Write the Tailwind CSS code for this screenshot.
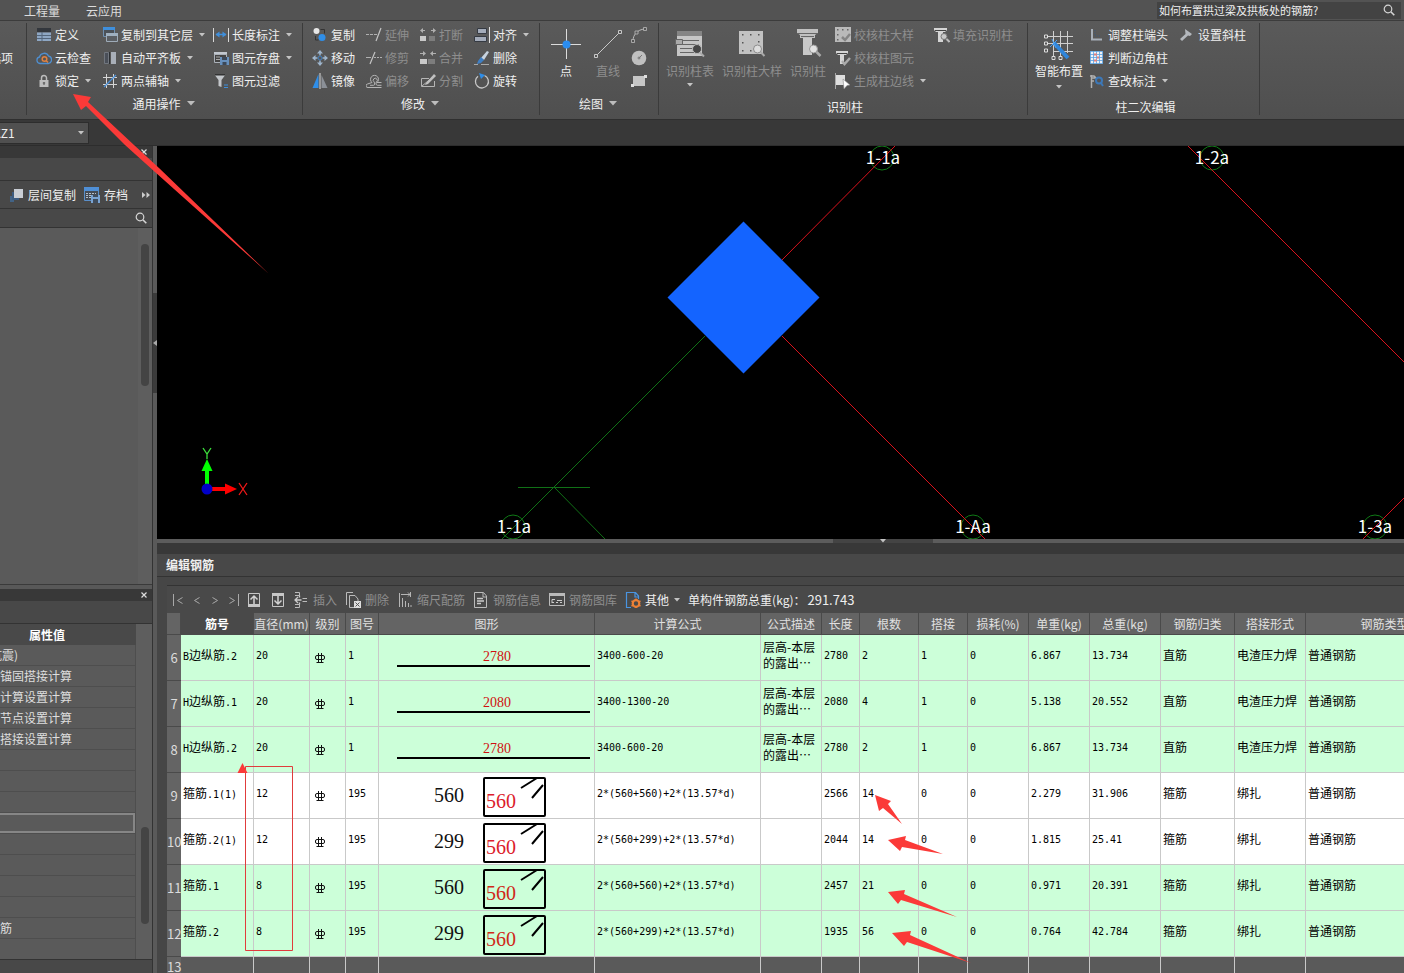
<!DOCTYPE html>
<html lang="zh-CN">
<head>
<meta charset="utf-8">
<meta name="viewport" content="width=device-width, initial-scale=1">
<title>编辑钢筋</title>
<script src="https://cdn.jsdelivr.net/npm/@tailwindcss/browser@4"></script>
</head>
<body class="relative flex h-screen flex-col overflow-hidden bg-[#383838] font-['Noto_Sans_CJK_SC',sans-serif] text-xs leading-4 text-[#efefef]">

<!-- Icon library -->
<svg class="hidden" aria-hidden="true">
  <symbol id="caret" viewBox="0 0 6 4"><path d="M0 0h6L3 3.5z" fill="#c4c4c4"/></symbol>
  <symbol id="caret-lg" viewBox="0 0 8 5"><path d="M0 0h8L4 4.5z" fill="#bdbdbd"/></symbol>
  <symbol id="define" viewBox="0 0 16 16"><path d="M1 1h14v4H1z" fill="#33373d"/><path d="M1 5.500h14V14H1z" fill="#8ea7c4"/><path d="M1 8.500h14M1 11.500h14M6 5v9" stroke="#54667c"/></symbol>
  <symbol id="cloud" viewBox="0 0 16 16"><path d="M4 13.500a3.300 3.300 0 0 1-.5-6.500A4.800 4.800 0 0 1 12.500 6a3.800 3.800 0 0 1-.3 7.500z" fill="none" stroke="#4f8fd0" stroke-width="1.300"/><circle cx="8.500" cy="9" r="2.300" fill="none" stroke="#e08243" stroke-width="1.500"/><path d="m10 10.500 2 2" stroke="#e08243" stroke-width="1.500"/></symbol>
  <symbol id="lock" viewBox="0 0 16 16"><path d="M5.500 7V5a2.500 2.500 0 0 1 5 0v2" fill="none" stroke="#bdbdbd" stroke-width="1.500"/><path d="M3.500 7h9v7h-9z" fill="#bdbdbd"/><path d="M8 9v3M6.800 10h2.400" stroke="#555"/></symbol>
  <symbol id="copy-floor" viewBox="0 0 16 16"><path d="M1.500 1.500h11v8h-11z" fill="#4b5158" stroke="#6f8faf"/><path d="M1 0h12v3H1z" fill="#3f8fdc"/><path d="M4.500 6.500h11v8h-11z" fill="#5b5f64" stroke="#9eabb8"/><path d="M4 6h12v3H4z" fill="#9fb0c0"/></symbol>
  <symbol id="align-slab" viewBox="0 0 16 16"><path d="M2.500 2.500h4v11h-4z" fill="#4a4f58" stroke="#71767e"/><path d="M9 2h5v12H9z" fill="#a9afb8"/><path d="M7.500 2v12" stroke="#2c2f33"/></symbol>
  <symbol id="axis2" viewBox="0 0 16 16"><path d="M4.500 1v14M11.500 1v14M1 4.500h14M1 11.500h14" stroke="#d5d5d5"/><path d="m2 14 12-12" stroke="#4a90d9" stroke-width="1.200"/></symbol>
  <symbol id="dim" viewBox="0 0 16 16"><path d="M.5 1v14M15.500 1v14" stroke="#d8d8d8"/><path d="M3 7.500h10" stroke="#3f8fdc" stroke-width="1.500"/><path d="m2.500 7.500 4-3v6zM13.500 7.500l-4-3v6z" fill="#3f8fdc"/></symbol>
  <symbol id="save-elem" viewBox="0 0 16 16"><path d="M1 2h13v3H1z" fill="#c2c7ce"/><path d="M1.500 4.500h12v8h-12z" fill="#444" stroke="#aab0b8"/><path d="M3 7h4M3 9.500h4" stroke="#aaa"/><path d="M7 7h9v8H7z" fill="#6790bd"/><path d="M9 7h5v3H9zM9.500 12h4v3h-4z" fill="#3c4858"/></symbol>
  <symbol id="filter" viewBox="0 0 16 16"><path d="M1 1h12L8.500 7v7l-3-1V7z" fill="#c3c6ca"/><path d="M1 1h12l-1 1.500H2z" fill="#333"/><path d="M11 12h4M11 14.500h4" stroke="#3f8fdc"/></symbol>
  <symbol id="copy" viewBox="0 0 16 16"><circle cx="4.500" cy="4" r="3" fill="#e6e6e6"/><path d="M8.500 2.500h4v4M3.500 9v4h3" fill="none" stroke="#333"/><circle cx="10" cy="10.500" r="3.500" fill="#2f8ee8"/></symbol>
  <symbol id="move" viewBox="0 0 16 16"><path d="m8 0 3 3.500H5zM8 16l3-3.500H5zM0 8l3.500-3v6zM16 8l-3.500-3v6z" fill="#9fb6cd"/><path d="M8 3v2.500M8 10.500V13M3 8h2.500M10.500 8H13" stroke="#9fb6cd" stroke-width="1.500"/><circle cx="8" cy="8" r="2" fill="none" stroke="#3f7fbf"/></symbol>
  <symbol id="mirror" viewBox="0 0 16 16"><path d="M6.500 1v14H.5z" fill="#2f8ee8"/><path d="M8 0v16" stroke="#ddd"/><path d="M9.500 2v13h6z" fill="#8b9097"/></symbol>
  <symbol id="extend" viewBox="0 0 16 16"><path d="M0 7.500h11" stroke="#b0b0b0" stroke-dasharray="3 1"/><path d="m10 14 5-13" stroke="#c4c4c4" stroke-width="1.200"/></symbol>
  <symbol id="trim" viewBox="0 0 16 16"><path d="M0 7.500h5" stroke="#b0b0b0"/><path d="M8 7.500h8" stroke="#b0b0b0" stroke-dasharray="2 1"/><path d="m4 14 5-12" stroke="#c4c4c4" stroke-width="1.200"/></symbol>
  <symbol id="offset" viewBox="0 0 16 16"><path d="M6 9.500a4 4 0 1 1 5 0h4.500M6 9.500 1.500 11a1.700 1.700 0 0 0 .5 3.500h13.500M4 12.300h3.500c1.500 0 1.500-2 .5-3.500a2 2 0 1 1 2.500 0c-1 1.500-.5 3.500 1 3.500h4" fill="none" stroke="#b5b5b5"/></symbol>
  <symbol id="break" viewBox="0 0 16 16"><path d="M5 3.500H1M11 3.500h4" stroke="#b0b0b0"/><path d="m0 3.500 3-2.500v5zM16 3.500 13 1v5z" fill="#b0b0b0"/><path d="M0 9h6v5H0z" fill="#c9c9c9"/><path d="M9 9h6v5H9z" fill="#7d7d7d"/></symbol>
  <symbol id="merge" viewBox="0 0 16 16"><path d="M0 3.500h5M11 3.500h5" stroke="#b0b0b0"/><path d="m6 3.500-3-2.500v5zM10 3.500 13 1v5z" fill="#b0b0b0"/><path d="M0 9h7v5H0z" fill="#c9c9c9"/><path d="M8 9h7v5H8z" fill="#7d7d7d"/></symbol>
  <symbol id="split" viewBox="0 0 16 16"><path d="M9 5.500H1.500v8h13V8M2 13l12-10" fill="none" stroke="#b5b5b5"/><path d="m6 10 8-9 2 2-8 8-3 1z" fill="#c0c0c0"/></symbol>
  <symbol id="align" viewBox="0 0 16 16"><path d="M3.500 1.500h9v5h-9zM.5 9.500h12v5H.5z" fill="#a4acba" stroke="#353a42"/><path d="M15.500 0v16" stroke="#e0e0e0"/></symbol>
  <symbol id="erase" viewBox="0 0 16 16"><path d="m7 8 6-7 2 1-5 8z" fill="#c7d3df"/><path d="m4 11 3-4 3 3-3 3-4 1z" fill="#3f7fc4"/><path d="M0 14.500h4M7 14.500h8" stroke="#aaa"/></symbol>
  <symbol id="rotate" viewBox="0 0 16 16"><path d="M10.500 2.500A6.500 6.500 0 1 1 4 3.300" fill="none" stroke="#c8c8c8" stroke-width="1.300"/><path d="m5 0 6 2-4 4z" fill="#2f8ee8"/></symbol>
  <symbol id="point" viewBox="0 0 30 30"><path d="M15.500 0v30M0 15.500h30" stroke="#dcdcdc"/><circle cx="15.500" cy="15.500" r="4" fill="#2b8df0"/></symbol>
  <symbol id="line" viewBox="0 0 30 30"><path d="M3.500 26.500 26.500 3.500" stroke="#c8c8c8"/><path d="M1.500 25.500h3v3h-3zM25.500 1.500h3v3h-3z" fill="#555" stroke="#c8c8c8"/></symbol>
  <symbol id="arc" viewBox="0 0 16 16"><path d="M2 14C2 8 6 2.500 14 2" fill="none" stroke="#bbb"/><path d="M.5 12.500h3v3h-3zM12.500.5h3v3h-3zM4 4h3v3H4z" fill="#555" stroke="#bbb" stroke-width=".8"/></symbol>
  <symbol id="disc" viewBox="0 0 16 16"><circle cx="8" cy="8" r="7.300" fill="#c0c0c0"/><path d="m8 8 3-3M6.500 8h3M8 6.500v3" stroke="#777"/></symbol>
  <symbol id="rect" viewBox="0 0 16 16"><path d="M2 3h12v10H2z" fill="#c6c6c6"/><path d="M13 2h3v3h-3zM0 11h3v3H0z" fill="#ddd"/></symbol>
  <symbol id="col-table" viewBox="0 0 30 30"><path d="M2 2h25v5H2z" fill="#858585"/><path d="M2 7h25v20H2z" fill="#c6c6c6"/><path d="M5 11.500h19M5 15.500h19M5 19.500h16M5 23.500h14" stroke="#666"/><path d="M.5 10.500h7v5h-7z" fill="#aaa" stroke="#666"/><circle cx="22" cy="20" r="4.500" fill="#484848" stroke="#bbb"/><path d="m25 23.500 4 4" stroke="#aaa" stroke-width="2"/></symbol>
  <symbol id="col-sample" viewBox="0 0 30 30"><path d="M2 2h24v23H2z" fill="#c2c2c2"/><path d="M5 5h1.500v1.500H5zM13 5h1.500v1.500H13zM21 5h1.500v1.500H21zM5 13h1.500v1.500H5zM21 12h1.500v1.500H21zM5 21h1.500v1.500H5zM13 21h1.500v1.500H13z" fill="#555"/><circle cx="20.500" cy="20" r="4" fill="#ddd" stroke="#8c8c8c"/><path d="m23.500 23 4 4" stroke="#aaa" stroke-width="2"/></symbol>
  <symbol id="col-id" viewBox="0 0 30 30"><path d="M4 0h21v4l-3 2v3H7V6L4 4z" fill="#c0c0c0"/><path d="M4 4.500h21M8 7.500h13" stroke="#666"/><path d="M10 9h9v17h-9z" fill="#c9c9c9"/><circle cx="20.500" cy="20" r="4" fill="#e2e2e2" stroke="#999"/><path d="m23.500 23 4 4" stroke="#aaa" stroke-width="2.500"/></symbol>
  <symbol id="chk-sample" viewBox="0 0 16 16"><path d="M0 0h16v15H0z" fill="#bababa"/><path d="M2 2h1.500v1.500H2zM7 2h1.500v1.500H7zM12 2h1.500v1.500H12zM2 7h1.500v1.500H2zM2 12h1.500v1.500H2z" fill="#666"/><path d="m7 10 3 3 5-6" fill="none" stroke="#858585" stroke-width="2.500"/></symbol>
  <symbol id="chk-col" viewBox="0 0 16 16"><path d="M1 1h12v2l-2 2H3L1 3zM5 5h4v9H5z" fill="#d5d5d5"/><path d="M2 3.500h10" stroke="#444"/><path d="m7 11 2.500 3L15 8" fill="none" stroke="#aaa" stroke-width="2.500"/></symbol>
  <symbol id="col-edge" viewBox="0 0 16 16"><path d="M.5 0v16" stroke="#aaa"/><path d="M1 2h9v10H1z" fill="#dedede"/><path d="m8 6 7 6-3 .5L9 16z" fill="#fff" stroke="#888" stroke-width=".6"/></symbol>
  <symbol id="fill-col" viewBox="0 0 16 16"><path d="M0 1h13v2l-2 2H2L0 3zM4 5h5v10H4z" fill="#d5d5d5"/><path d="M1 3.500h11" stroke="#444"/><circle cx="10" cy="9.500" r="3" fill="#c8c8c8" stroke="#777"/><path d="m12.500 12 3 3" stroke="#bbb" stroke-width="2"/></symbol>
  <symbol id="smart" viewBox="0 0 30 32"><path d="M9.500 2v26M16.500 2v26M23.500 2v22M3 7.500h26M3 14.500h26M10 22.500h19" stroke="#d0d0d0"/><path d="M.5 6h3v3h-3zM.5 13h3v3h-3zM.5 20h3v3h-3zM8 27.500h3v3H8zM15 27.500h3v3h-3z" fill="#555" stroke="#ddd"/><path d="m10 14 14 15" stroke="#2f86dc" stroke-width="4"/><path d="m6 18 7-7M8 10l4 9" stroke="#4ba0f0"/></symbol>
  <symbol id="end" viewBox="0 0 16 16"><path d="M3 2v10.500H13" fill="none" stroke="#a8b0ba" stroke-width="2"/><path d="M6 3v6h6" fill="none" stroke="#3d5878" stroke-dasharray="1 1"/></symbol>
  <symbol id="corner" viewBox="0 0 16 16"><path d="M1 1h13v13H1z" fill="#f0f3f7"/><path d="M1.500 1v13M4.500 1v13M7.500 1v13M10.500 1v13M13.500 1v13M1 1.500h13M1 4.500h13M1 7.500h13M1 10.500h13M1 13.500h13" stroke="#5aa0dd" stroke-width=".8"/><path d="M5 3.500h3v2H5zM8 6.500h2v2H8zM5 9.500h3v2H5z" fill="#e08080"/></symbol>
  <symbol id="check-mark" viewBox="0 0 16 16"><path d="M2.500 2v13M1 3h4l2 2H3M3 8h2" stroke="#b0b0b0" stroke-width="1.500" fill="none"/><circle cx="10" cy="7.500" r="3" fill="none" stroke="#3d78b8" stroke-width="2"/><path d="m12 10 2 3" stroke="#3d78b8" stroke-width="2"/></symbol>
  <symbol id="slant" viewBox="0 0 16 16"><path d="m6 2 7 5-2 2-2-.5-6 5.500-2-2L6.500 7z" fill="#b4b8bd"/></symbol>
  <symbol id="search" viewBox="0 0 12 12"><circle cx="5" cy="5" r="3.800" fill="none" stroke="#d5d5d5" stroke-width="1.200"/><path d="m7.800 7.800 3.500 3.500" stroke="#d5d5d5" stroke-width="1.600"/></symbol>
  <symbol id="layers" viewBox="0 0 16 16"><path d="M1 10h3M1 12h6M1 14h4" stroke="#3c7fc4"/><path d="M3 5h7v8H3z" fill="#3b5b80"/><path d="M5 2h9v9H5z" fill="#c9ced5"/></symbol>
  <symbol id="archive" viewBox="0 0 16 16"><path d="M.5 1.500h14v12H.5z" fill="#454b54" stroke="#5a8fca"/><path d="M0 0h15v4H0z" fill="#4f8fd6"/><path d="M2 6.500h10M2 8.500h6M2 10.500h5" stroke="#b4bfcc" stroke-dasharray="2 1"/><path d="M7 8h9v8H7z" fill="#79a3d2"/><path d="M9 8h5v2H9zM9 12h5v4H9z" fill="#3f4c5c"/></symbol>
  <symbol id="close" viewBox="0 0 6 6"><path d="m.5.5 5 5M5.500.5l-5 5" stroke="#ddd" stroke-width="1.200"/></symbol>
  <symbol id="up" viewBox="0 0 14 14"><path d="M1.500.5h11v13h-11z" fill="none" stroke="#c6c6c6"/><path d="M1 11h12v3H1z" fill="#c6c6c6"/><path d="M7 11V3M3.500 6.500 7 3l3.500 3.500" fill="none" stroke="#d2d2d2" stroke-width="1.500"/></symbol>
  <symbol id="down" viewBox="0 0 14 14"><path d="M1.500.5h11v13h-11z" fill="none" stroke="#c6c6c6"/><path d="M1 0h12v3H1z" fill="#c6c6c6"/><path d="M7 3v8M3.500 7.500 7 11l3.500-3.500" fill="none" stroke="#d2d2d2" stroke-width="1.500"/></symbol>
  <symbol id="insert" viewBox="0 0 16 16"><path d="M2 .5h4.500v3H2M2 15.500h4.500v-3H2M9.500 6.500H14M9.500 9.500H14" fill="none" stroke="#bbb"/><path d="M2 8h6.500M5 5 2 8l3 3M6.500 3.500v2M6.500 10.500v2" fill="none" stroke="#ccc" stroke-width="1.300"/></symbol>
  <symbol id="delete" viewBox="0 0 16 16"><path d="M1.500 13V.5H8M4.500 15.500v-12H10l3 3.500v8.500z" fill="none" stroke="#bbb"/><path d="M9 9h7v7H9z" fill="#ddd"/><path d="m10.500 10.500 4 4m0-4-4 4" stroke="#555"/></symbol>
  <symbol id="scale" viewBox="0 0 16 16"><path d="M2.500 1v14M5.500 6v9M8.500 9v6M11.500 11v4M14 13v2" stroke="#b5b5b5"/><path d="M4 2.500h9M11 .5l2 2-2 2M13.500 0v5" fill="none" stroke="#b5b5b5"/></symbol>
  <symbol id="info" viewBox="0 0 16 16"><path d="M1.500.5h9l3 3.500v11.500h-12zM10 1v4h4" fill="none" stroke="#bbb"/><path d="M4 6.500h6M4 9h7M4 11.500h4" stroke="#ccc" stroke-width="1.300"/></symbol>
  <symbol id="library" viewBox="0 0 16 16"><path d="M.5 1.500h15v12H.5z" fill="none" stroke="#bbb"/><path d="M0 1h16v3H0z" fill="#bbb"/><path d="M3 11V7.500h3M8 8.500h5M3 10.500h2M7 10.500h2M11 10.500h2" fill="none" stroke="#ccc"/></symbol>
  <symbol id="other" viewBox="0 0 16 16"><path d="M6 15.500H1.500V.5h9l3 3.500v3M10 1v4h3" fill="none" stroke="#4a94e0" stroke-width="1.200"/><circle cx="11" cy="11.500" r="3.300" fill="none" stroke="#ee8136" stroke-width="2.200"/><path d="M11 6.500v2M11 14.500v1.500M6.500 9l2 1M13.500 13l2 1M6.500 14l2-1M13.500 10l2-1" stroke="#ee8136" stroke-width="1.500"/></symbol>
  <symbol id="grade" viewBox="0 0 10 12"><path d="M3.500 1v9M6.500 1v9M1.500 10.500h7" stroke="#111" fill="none"/><rect x=".5" y="3.500" width="9" height="4" rx="1.500" fill="none" stroke="#111"/></symbol>
  <symbol id="hoop" viewBox="0 0 215 45"><rect x="105" y="5" width="61" height="38" rx="1" fill="none" stroke="#000" stroke-width="2"/><path d="m142 15 16-10M153 25l11-13" stroke="#000" stroke-width="2"/></symbol>
</svg>

<!-- Menu tabs and help search -->
<header class="flex h-[21px] shrink-0 items-center border-b border-[#3c3c3c] bg-[#535353] pl-6">
  <nav class="flex gap-[26px] pt-px text-[#dcdcdc]"><a href="#">工程量</a><a href="#">云应用</a></nav>
  <label class="ml-auto mr-[3px] flex h-[17px] w-[244px] items-center bg-[#434343] pr-1.5">
    <input aria-label="搜索帮助" class="h-4 min-w-0 flex-1 bg-transparent px-[2px] text-[11px] leading-4 outline-none" value="如何布置拱过梁及拱板处的钢筋?">
    <svg class="size-3"><use href="#search"/></svg>
  </label>
</header>

<!-- Ribbon -->
<div class="flex h-[99px] shrink-0 border-b border-[#2f2f2f] bg-linear-to-b from-[#5a5a5a] to-[#4f4f4f] pt-[2px] pb-1 [&_button]:flex [&_button]:items-center [&_button]:whitespace-nowrap [&_section]:shrink-0 [&_section]:border-r [&_section]:border-[#3b3b3b]">
  <section class="w-[27px] overflow-hidden pt-[23px]"><button class="-ml-[11px] h-[23px]">选项</button></section>

  <section class="flex w-[276px] flex-col">
    <div class="grid grid-cols-[66px_111px_auto] grid-rows-[repeat(3,23px)] pl-[9px] [&_button]:gap-[3px]">
      <button><svg class="size-4"><use href="#define"/></svg>定义</button>
      <button><svg class="size-4"><use href="#copy-floor"/></svg>复制到其它层<svg class="ml-[3px] h-1 w-1.5"><use href="#caret"/></svg></button>
      <button><svg class="size-4"><use href="#dim"/></svg>长度标注<svg class="ml-[3px] h-1 w-1.5"><use href="#caret"/></svg></button>
      <button><svg class="size-4"><use href="#cloud"/></svg>云检查</button>
      <button><svg class="size-4"><use href="#align-slab"/></svg>自动平齐板<svg class="ml-[3px] h-1 w-1.5"><use href="#caret"/></svg></button>
      <button><svg class="size-4"><use href="#save-elem"/></svg>图元存盘<svg class="ml-[3px] h-1 w-1.5"><use href="#caret"/></svg></button>
      <button><svg class="size-4"><use href="#lock"/></svg>锁定<svg class="ml-[3px] h-1 w-1.5"><use href="#caret"/></svg></button>
      <button><svg class="size-4"><use href="#axis2"/></svg>两点辅轴<svg class="ml-[3px] h-1 w-1.5"><use href="#caret"/></svg></button>
      <button><svg class="size-4"><use href="#filter"/></svg>图元过滤</button>
    </div>
    <button class="h-7 justify-center gap-1.5 pr-[2px]">通用操作<svg class="h-[5px] w-2"><use href="#caret-lg"/></svg></button>
  </section>

  <section class="flex w-[237px] flex-col">
    <div class="grid grid-cols-[54px_54px_54px_auto] grid-rows-[repeat(3,23px)] pl-[9px] [&_button]:gap-[3px]">
      <button><svg class="size-4"><use href="#copy"/></svg>复制</button>
      <button class="text-[#8e8e8e]"><svg class="size-4"><use href="#extend"/></svg>延伸</button>
      <button class="text-[#8e8e8e]"><svg class="size-4"><use href="#break"/></svg>打断</button>
      <button><svg class="size-4"><use href="#align"/></svg>对齐<svg class="ml-[3px] h-1 w-1.5"><use href="#caret"/></svg></button>
      <button><svg class="size-4"><use href="#move"/></svg>移动</button>
      <button class="text-[#8e8e8e]"><svg class="size-4"><use href="#trim"/></svg>修剪</button>
      <button class="text-[#8e8e8e]"><svg class="size-4"><use href="#merge"/></svg>合并</button>
      <button><svg class="size-4"><use href="#erase"/></svg>删除</button>
      <button><svg class="size-4"><use href="#mirror"/></svg>镜像</button>
      <button class="text-[#8e8e8e]"><svg class="size-4"><use href="#offset"/></svg>偏移</button>
      <button class="text-[#8e8e8e]"><svg class="size-4"><use href="#split"/></svg>分割</button>
      <button><svg class="size-4"><use href="#rotate"/></svg>旋转</button>
    </div>
    <button class="h-7 justify-center gap-1.5 pr-[2px]">修改<svg class="h-[5px] w-2"><use href="#caret-lg"/></svg></button>
  </section>

  <section class="flex w-[119px] flex-col">
    <div class="flex h-[69px] gap-3 pl-[11px]">
      <button class="w-[30px] flex-col gap-1 pt-1.5"><svg class="size-[30px]"><use href="#point"/></svg>点</button>
      <button class="w-[30px] flex-col gap-1 pt-1.5 text-[#8e8e8e]"><svg class="size-[30px]"><use href="#line"/></svg>直线</button>
      <div class="-ml-1 flex flex-col [&>button]:h-[23px]">
        <button aria-label="弧"><svg class="size-4"><use href="#arc"/></svg></button>
        <button aria-label="圆"><svg class="size-4"><use href="#disc"/></svg></button>
        <button aria-label="矩形"><svg class="size-4"><use href="#rect"/></svg></button>
      </div>
    </div>
    <button class="h-7 justify-center gap-1.5 pr-[2px]">绘图<svg class="h-[5px] w-2"><use href="#caret-lg"/></svg></button>
  </section>

  <section class="flex w-[369px] flex-col">
    <div class="flex h-[69px] pl-[7px] text-[#8e8e8e]">
      <div class="flex gap-2 pr-[9px] [&>button]:flex-col [&>button]:gap-1 [&>button]:pt-1.5">
        <button><svg class="size-[30px]"><use href="#col-table"/></svg>识别柱表<svg class="h-1 w-1.5"><use href="#caret"/></svg></button>
        <button><svg class="size-[30px]"><use href="#col-sample"/></svg>识别柱大样</button>
        <button><svg class="size-[30px]"><use href="#col-id"/></svg>识别柱</button>
      </div>
      <div class="grid grid-cols-[99px_auto] grid-rows-[repeat(3,23px)] [&>button]:gap-[3px]">
        <button><svg class="size-4"><use href="#chk-sample"/></svg>校核柱大样</button>
        <button><svg class="size-4"><use href="#fill-col"/></svg>填充识别柱</button>
        <button class="col-span-2"><svg class="size-4"><use href="#chk-col"/></svg>校核柱图元</button>
        <button class="col-span-2"><svg class="size-4"><use href="#col-edge"/></svg>生成柱边线<svg class="ml-[3px] h-1 w-1.5"><use href="#caret"/></svg></button>
      </div>
    </div>
    <h2 class="pt-[7px] pl-1 text-center">识别柱</h2>
  </section>

  <section class="flex w-[232px] flex-col">
    <div class="flex h-[69px] gap-1.5 pl-[7px]">
      <button class="flex-col gap-[2px] pt-1.5"><svg class="h-8 w-[30px]"><use href="#smart"/></svg>智能布置<svg class="mt-1 h-1 w-1.5"><use href="#caret"/></svg></button>
      <div class="grid grid-cols-[90px_auto] grid-rows-[repeat(3,23px)] [&>button]:gap-[3px]">
        <button><svg class="size-4"><use href="#end"/></svg>调整柱端头</button>
        <button><svg class="size-4"><use href="#slant"/></svg>设置斜柱</button>
        <button class="col-span-2"><svg class="size-4"><use href="#corner"/></svg>判断边角柱</button>
        <button class="col-span-2"><svg class="size-4"><use href="#check-mark"/></svg>查改标注<svg class="ml-[3px] h-1 w-1.5"><use href="#caret"/></svg></button>
      </div>
    </div>
    <h2 class="pt-[7px] pl-1 text-center">柱二次编辑</h2>
  </section>
</div>

<!-- Component picker -->
<div class="flex h-[26px] shrink-0 items-center border-b border-[#2d2d2d] bg-[#383838]">
  <div class="relative">
    <select aria-label="构件" class="-ml-3 h-[22px] w-[101px] appearance-none border border-[#2d2d2d] bg-[#505050] pl-1 text-xs leading-4"><option>KZ1</option></select>
    <svg class="pointer-events-none absolute top-[9px] right-[5px] h-1 w-1.5"><use href="#caret"/></svg>
  </div>
</div>

<div class="flex min-h-0 flex-1">
  <!-- Left docks -->
  <aside class="flex w-[153px] shrink-0 flex-col border-r border-[#333] bg-[#484848]">
    <div class="flex h-3 shrink-0 items-center justify-end bg-[#383838] pr-[5px]"><button aria-label="关闭构件列表"><svg class="size-1.5"><use href="#close"/></svg></button></div>
    <div class="h-[23px] shrink-0 border-b border-[#333]"></div>
    <div class="flex h-7 shrink-0 items-center gap-2 border-b border-[#333] pl-[9px]">
      <button class="flex items-center gap-[3px]"><svg class="size-4"><use href="#layers"/></svg>层间复制</button>
      <button class="flex items-center gap-1"><svg class="size-4"><use href="#archive"/></svg>存档</button>
      <button aria-label="更多" class="ml-1.5"><svg class="h-1.5 w-2" viewBox="0 0 8 6"><path d="m0 0 3.500 3L0 6zM4.500 0 8 3 4.500 6z" fill="#ccc"/></svg></button>
    </div>
    <label class="flex h-[19px] shrink-0 items-center border-b border-[#333] pr-[5px]"><input aria-label="搜索构件" class="min-w-0 flex-1 bg-transparent outline-none"><svg class="size-3"><use href="#search"/></svg></label>
    <div class="flex h-[357px] shrink-0 justify-end border-b border-[#3a3a3a] bg-[#5a5a5a]">
      <div class="w-[14px] bg-[#5e5e5e] pt-4 pl-[3px]"><div class="h-[142px] w-2 rounded-full bg-[#444]"></div></div>
    </div>
    <div class="h-1 shrink-0 bg-[#585858]"></div>
    <div class="flex h-3 shrink-0 items-center justify-end bg-[#383838] pr-[5px]"><button aria-label="关闭属性列表"><svg class="size-1.5"><use href="#close"/></svg></button></div>
    <div class="h-[23px] shrink-0 border-b border-[#333]"></div>
    <div class="flex h-[336px] shrink-0 border-b border-[#333] bg-[#5a5a5a]">
      <div class="flex-1 overflow-hidden">
        <table class="w-full table-fixed border-separate border-spacing-0 text-[#dedede] [&_td]:h-[21px] [&_td]:border-r [&_td]:border-b [&_td]:border-[#4e4e4e] [&_td]:p-0 [&_td]:whitespace-nowrap">
          <thead><tr><th class="h-[21px] bg-[#494949] p-0 pr-[42px] text-center font-bold text-white">属性值</th></tr></thead>
          <tbody>
            <tr><td><span class="-ml-[10px]">抗震)</span></td></tr>
            <tr><td>锚固搭接计算</td></tr>
            <tr><td>计算设置计算</td></tr>
            <tr><td>节点设置计算</td></tr>
            <tr><td>搭接设置计算</td></tr>
            <tr><td></td></tr><tr><td></td></tr><tr><td></td></tr>
            <tr><td><div class="h-5 border-2 border-l-0 border-[#868686]"></div></td></tr>
            <tr><td></td></tr><tr><td></td></tr><tr><td></td></tr><tr><td></td></tr>
            <tr><td>筋</td></tr>
            <tr><td></td></tr>
          </tbody>
        </table>
      </div>
      <div class="w-4 bg-[#5e5e5e] pt-[203px] pl-[5px]"><div class="h-[97px] w-2 rounded-full bg-[#444]"></div></div>
    </div>
  </aside>
  <div class="w-1 shrink-0 bg-[#5a5a5a] pt-[147px]"><div class="flex h-[100px] items-center bg-[#3b3b3b]"><svg class="h-1.5 w-1" viewBox="0 0 4 6"><path d="M4 0v6L0 3z" fill="#aaa"/></svg></div></div>

  <main class="flex min-w-0 flex-1 flex-col">
    <!-- Drawing canvas -->
    <svg class="h-[393px] w-full shrink-0 bg-black" viewBox="157 146 1247 393" preserveAspectRatio="xMinYMin slice" role="img" aria-label="轴网与柱">
      <g fill="none" stroke="#0f7a16">
        <circle cx="882" cy="158" r="12"/><circle cx="1212" cy="158" r="12"/><circle cx="513" cy="527" r="12"/><circle cx="973" cy="527" r="12"/><circle cx="1375" cy="527" r="12"/>
        <path d="M705 336 502 539M518 487.500h72M554 487l51 52" stroke="#107016"/>
      </g>
      <path d="M895 146 782 260M782 336l203 203M1188 146l216 216M1404 498l-41 41" stroke="#d8121c"/>
      <path d="m743.500 221.500 76 76-76 76-76-76z" fill="#1464ff"/>
      <g class="font-['Noto_Sans_CJK_SC',sans-serif] text-[17px]" fill="#fff" text-anchor="middle">
        <text x="883" y="164">1-1a</text><text x="1212" y="164">1-2a</text><text x="514" y="533">1-1a</text><text x="973" y="533">1-Aa</text><text x="1375" y="533">1-3a</text>
      </g>
      <path d="M207 489v-20" stroke="#0f0" stroke-width="4"/><path d="m207 459 5.500 12h-11z" fill="#0f0"/>
      <path d="M207 489h20" stroke="#f00" stroke-width="4"/><path d="m237 489-12-5.500v11z" fill="#f00"/>
      <circle cx="207" cy="489" r="5.500" fill="#0000c8"/>
      <path d="m203 448 4 6 4-6M207 454v5" fill="none" stroke="#3ce03c" stroke-width="1.300"/>
      <path d="m239 483 8 12M247 483l-8 12" stroke="#f01818" stroke-width="1.300"/>
    </svg>
    <div class="flex h-1 shrink-0 justify-center bg-[#5c5c5c] pl-[205px]"><div class="flex w-[100px] justify-center bg-[#444]"><svg class="h-1 w-1.5"><use href="#caret"/></svg></div></div>
    <div class="h-[11px] shrink-0 bg-[#383838]"></div>
    <h2 class="flex h-[23px] shrink-0 items-center border-b border-[#333] bg-[#484848] pl-[9px] font-bold">编辑钢筋</h2>

    <section class="flex min-h-0 flex-1 flex-col bg-[#464646] pt-2 pl-2.5">
      <!-- Rebar toolbar -->
      <div class="flex h-7 shrink-0 items-center gap-2 border-t border-[#333] bg-[#494949] pl-1.5 text-[#8e8e8e] [&_button]:flex [&_button]:shrink-0 [&_button]:items-center [&_button]:gap-1">
        <div class="flex w-[66px] items-center justify-between [&_svg]:h-3 [&_svg]:w-2.5 [&_svg]:fill-none [&_svg]:stroke-[#a8a8a8]">
          <button aria-label="首行"><svg viewBox="0 0 10 12"><path d="M.5 0v12M9.500 3.500l-5 3 5 3"/></svg></button>
          <button aria-label="上一行"><svg viewBox="0 0 10 12"><path d="m7.500 3.500-5 3 5 3"/></svg></button>
          <button aria-label="下一行"><svg viewBox="0 0 10 12"><path d="m2.500 3.500 5 3-5 3"/></svg></button>
          <button aria-label="末行"><svg viewBox="0 0 10 12"><path d="M9.500 0v12M.5 3.500l5 3-5 3"/></svg></button>
        </div>
        <div class="flex gap-2.5"><button aria-label="上移"><svg class="size-[14px]"><use href="#up"/></svg></button>
        <button aria-label="下移"><svg class="size-[14px]"><use href="#down"/></svg></button></div>
        <button><svg class="size-4"><use href="#insert"/></svg>插入</button>
        <button><svg class="size-4"><use href="#delete"/></svg>删除</button>
        <button><svg class="size-4"><use href="#scale"/></svg>缩尺配筋</button>
        <button><svg class="size-4"><use href="#info"/></svg>钢筋信息</button>
        <button><svg class="size-4"><use href="#library"/></svg>钢筋图库</button>
        <button class="text-[#efefef]"><svg class="size-4"><use href="#other"/></svg>其他<svg class="ml-px h-1 w-1.5"><use href="#caret"/></svg></button>
        <p class="whitespace-nowrap text-[#efefef]">单构件钢筋总重(kg)：<span class="pl-[2px] text-[13px]">291.743</span></p>
      </div>

      <!-- Rebar table -->
      <div class="min-h-0 flex-1 overflow-hidden bg-[#5a5a5a]">
        <table class="w-[1297px] table-fixed border-separate border-spacing-0 text-black [&_tbody_td]:border-r [&_tbody_td]:border-b [&_tbody_td]:border-[#c9c9c9] [&_tbody_td]:p-0 [&_tbody_td]:pb-[3px] [&_tbody_td]:pl-[2px] [&_tbody_td]:font-['DejaVu_Sans_Mono','Noto_Sans_CJK_SC',monospace] [&_tbody_td]:text-[10px] [&_tbody_td]:leading-[14px] [&_tbody_td]:whitespace-nowrap [&_tbody_th]:border-b [&_tbody_th]:border-[#4a4a4a] [&_tbody_th]:bg-[#646464] [&_tbody_th]:p-0 [&_tbody_th]:text-center [&_tbody_th]:text-[13px] [&_tbody_th]:font-normal [&_tbody_th]:text-[#dcdcdc] [&_b]:font-['Noto_Sans_CJK_SC',sans-serif] [&_b]:font-normal [&_b]:text-xs/[14px] [&_thead_th]:h-[22px] [&_thead_th]:border-r [&_thead_th]:border-b [&_thead_th]:border-[#4a4a4a] [&_thead_th]:bg-[#646464] [&_thead_th]:p-0 [&_thead_th]:font-normal [&_thead_th]:whitespace-nowrap [&_thead_th]:text-[#e0e0e0]">
          <colgroup><col class="w-[14px]"><col class="w-[73px]"><col class="w-[56px]"><col class="w-[36px]"><col class="w-[33px]"><col class="w-[216px]"><col class="w-[166px]"><col class="w-[61px]"><col class="w-[38px]"><col class="w-[59px]"><col class="w-[49px]"><col class="w-[61px]"><col class="w-[61px]"><col class="w-[71px]"><col class="w-[74px]"><col class="w-[71px]"><col class="w-[158px]"></colgroup>
          <thead><tr><th></th><th><span class="flex h-full items-center justify-center bg-[#494949] font-bold text-white">筋号</span></th><th>直径(mm)</th><th>级别</th><th>图号</th><th>图形</th><th>计算公式</th><th>公式描述</th><th>长度</th><th>根数</th><th>搭接</th><th>损耗(%)</th><th>单重(kg)</th><th>总重(kg)</th><th>钢筋归类</th><th>搭接形式</th><th>钢筋类型</th></tr></thead>
          <tbody>
            <tr class="h-[46px] bg-[#ccffd9]"><th>6</th><td>B<b>边纵筋</b>.2</td><td>20</td><td><svg class="mt-1 ml-[3px] h-3 w-2.5"><use href="#grade"/></svg></td><td>1</td><td><svg class="-mb-[3px] -ml-[2px] h-[45px] w-[215px]"><text x="118" y="26" text-anchor="middle" fill="#d01010" class="font-['Liberation_Serif',serif] text-[14px]">2780</text><path d="M18 31h193" stroke="#000" stroke-width="2"/></svg></td><td>3400-600-20</td><td><b>层高-本层<br>的露出⋯</b></td><td>2780</td><td>2</td><td>1</td><td>0</td><td>6.867</td><td>13.734</td><td><b>直筋</b></td><td><b>电渣压力焊</b></td><td><b>普通钢筋</b></td></tr>
            <tr class="h-[46px] bg-[#ccffd9]"><th>7</th><td>H<b>边纵筋</b>.1</td><td>20</td><td><svg class="mt-1 ml-[3px] h-3 w-2.5"><use href="#grade"/></svg></td><td>1</td><td><svg class="-mb-[3px] -ml-[2px] h-[45px] w-[215px]"><text x="118" y="26" text-anchor="middle" fill="#d01010" class="font-['Liberation_Serif',serif] text-[14px]">2080</text><path d="M18 31h193" stroke="#000" stroke-width="2"/></svg></td><td>3400-1300-20</td><td><b>层高-本层<br>的露出⋯</b></td><td>2080</td><td>4</td><td>1</td><td>0</td><td>5.138</td><td>20.552</td><td><b>直筋</b></td><td><b>电渣压力焊</b></td><td><b>普通钢筋</b></td></tr>
            <tr class="h-[46px] bg-[#ccffd9]"><th>8</th><td>H<b>边纵筋</b>.2</td><td>20</td><td><svg class="mt-1 ml-[3px] h-3 w-2.5"><use href="#grade"/></svg></td><td>1</td><td><svg class="-mb-[3px] -ml-[2px] h-[45px] w-[215px]"><text x="118" y="26" text-anchor="middle" fill="#d01010" class="font-['Liberation_Serif',serif] text-[14px]">2780</text><path d="M18 31h193" stroke="#000" stroke-width="2"/></svg></td><td>3400-600-20</td><td><b>层高-本层<br>的露出⋯</b></td><td>2780</td><td>2</td><td>1</td><td>0</td><td>6.867</td><td>13.734</td><td><b>直筋</b></td><td><b>电渣压力焊</b></td><td><b>普通钢筋</b></td></tr>
            <tr class="h-[46px] bg-white"><th>9</th><td><b>箍筋</b>.1(1)</td><td>12</td><td><svg class="mt-1 ml-[3px] h-3 w-2.5"><use href="#grade"/></svg></td><td>195</td><td><svg class="-mb-[3px] -ml-[2px] h-[45px] w-[215px] font-['Liberation_Serif',serif] text-[20px]"><use href="#hoop"/><text x="55" y="29" fill="#111">560</text><text x="107" y="35" fill="#dc1c2c">560</text></svg></td><td>2*(560+560)+2*(13.57*d)</td><td></td><td>2566</td><td>14</td><td>0</td><td>0</td><td>2.279</td><td>31.906</td><td><b>箍筋</b></td><td><b>绑扎</b></td><td><b>普通钢筋</b></td></tr>
            <tr class="h-[46px] bg-white"><th>10</th><td><b>箍筋</b>.2(1)</td><td>12</td><td><svg class="mt-1 ml-[3px] h-3 w-2.5"><use href="#grade"/></svg></td><td>195</td><td><svg class="-mb-[3px] -ml-[2px] h-[45px] w-[215px] font-['Liberation_Serif',serif] text-[20px]"><use href="#hoop"/><text x="55" y="29" fill="#111">299</text><text x="107" y="35" fill="#dc1c2c">560</text></svg></td><td>2*(560+299)+2*(13.57*d)</td><td></td><td>2044</td><td>14</td><td>0</td><td>0</td><td>1.815</td><td>25.41</td><td><b>箍筋</b></td><td><b>绑扎</b></td><td><b>普通钢筋</b></td></tr>
            <tr class="h-[46px] bg-[#ccffd9]"><th>11</th><td><b>箍筋</b>.1</td><td>8</td><td><svg class="mt-1 ml-[3px] h-3 w-2.5"><use href="#grade"/></svg></td><td>195</td><td><svg class="-mb-[3px] -ml-[2px] h-[45px] w-[215px] font-['Liberation_Serif',serif] text-[20px]"><use href="#hoop"/><text x="55" y="29" fill="#111">560</text><text x="107" y="35" fill="#d02818">560</text></svg></td><td>2*(560+560)+2*(13.57*d)</td><td></td><td>2457</td><td>21</td><td>0</td><td>0</td><td>0.971</td><td>20.391</td><td><b>箍筋</b></td><td><b>绑扎</b></td><td><b>普通钢筋</b></td></tr>
            <tr class="h-[46px] bg-[#ccffd9]"><th>12</th><td><b>箍筋</b>.2</td><td>8</td><td><svg class="mt-1 ml-[3px] h-3 w-2.5"><use href="#grade"/></svg></td><td>195</td><td><svg class="-mb-[3px] -ml-[2px] h-[45px] w-[215px] font-['Liberation_Serif',serif] text-[20px]"><use href="#hoop"/><text x="55" y="29" fill="#111">299</text><text x="107" y="35" fill="#d02818">560</text></svg></td><td>2*(560+299)+2*(13.57*d)</td><td></td><td>1935</td><td>56</td><td>0</td><td>0</td><td>0.764</td><td>42.784</td><td><b>箍筋</b></td><td><b>绑扎</b></td><td><b>普通钢筋</b></td></tr>
            <tr class="h-5 bg-[#5a5a5a]"><th>13</th><td></td><td></td><td></td><td></td><td></td><td></td><td></td><td></td><td></td><td></td><td></td><td></td><td></td><td></td><td></td><td></td></tr>
          </tbody>
        </table>
      </div>
    </section>
  </main>
</div>

<!-- Review marks drawn over the window -->
<svg class="pointer-events-none absolute top-0 left-0 h-[973px] w-[1404px]" viewBox="0 0 1404 973" fill="#fb3a38" aria-hidden="true">
  <path d="m73 94 18 3-3 5 46 43 25 23 110 106-114-102-30-27-39-39-5 4z"/>
  <path d="m875 795 16 6-3 3 14 20-19-16-4 3z"/>
  <path d="m888 840 18-4-1 4 38 14-41-7-2 4z"/>
  <path d="m888 892 17-2-1 4 53 23-56-17-3 4z"/>
  <path d="m892 933 19-2-1 4 61 28-64-21-3 4z"/>
  <path d="M245.500 766.500h47v184h-47z" fill="none" stroke="#e03c3c"/>
  <path d="m242.500 763 5 10h-10z"/>
</svg>
</body>
</html>
